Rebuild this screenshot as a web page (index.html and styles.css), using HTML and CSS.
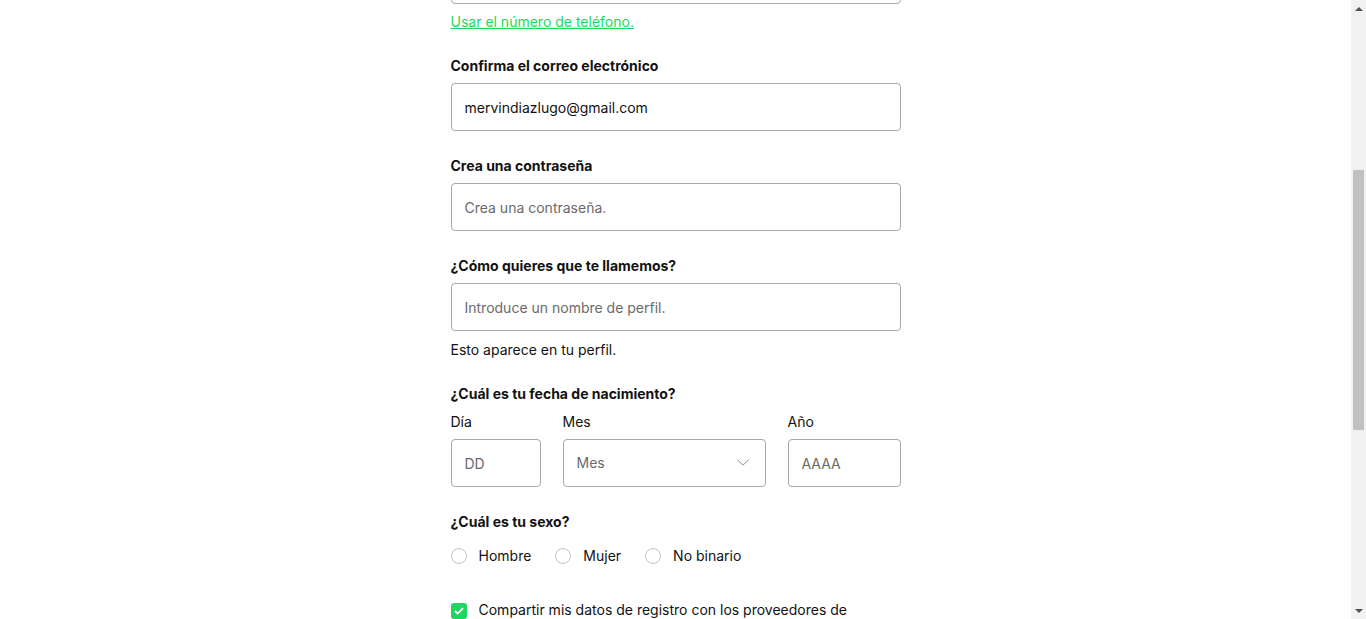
FILE: index.html
```html
<!DOCTYPE html>
<html lang="es">
<head>
<meta charset="utf-8">
<title>Regístrate - Spotify</title>
<link rel="stylesheet" href="styles.css">
</head>
<body>
<div class="window">
  <div class="scroller" id="scroller">
    <div class="page">
      <header class="header">
        <svg class="logo" width="40" height="40" viewBox="0 0 40 40" aria-hidden="true">
          <circle cx="20" cy="20" r="18" fill="#000"/>
          <path d="M10 15c7-2 15-1.5 21 2M11 20.5c6-1.6 12-1 17 1.8M12 25.5c5-1.2 9.5-.8 13.5 1.3" stroke="#fff" stroke-width="2.6" stroke-linecap="round" fill="none"/>
        </svg>
        <span class="brand">Spotify</span>
      </header>
      <main class="form-wrap">
        <h1 class="title">Regístrate gratis para escuchar.</h1>
        <button class="fb-btn" type="button">Regístrate con Facebook</button>
        <div class="divider"><span>o</span></div>
        <h2 class="subtitle">Regístrate con tu dirección de correo electrónico</h2>
        <form class="form">
          <div class="field field-email">
            <label class="label">¿Cuál es tu correo electrónico?</label>
            <input class="input" type="text" value="mervindiazlugo@gmail.com">
            <a class="phone-link" href="#">Usar el número de teléfono.</a>
          </div>
          <div class="field">
            <label class="label">Confirma el correo electrónico</label>
            <input class="input" type="text" value="mervindiazlugo@gmail.com">
          </div>
          <div class="field">
            <label class="label">Crea una contraseña</label>
            <input class="input" type="password" placeholder="Crea una contraseña.">
          </div>
          <div class="field field-name">
            <label class="label">¿Cómo quieres que te llamemos?</label>
            <input class="input" type="text" placeholder="Introduce un nombre de perfil.">
            <p class="help">Esto aparece en tu perfil.</p>
          </div>
          <div class="field">
            <p class="label label-dob">¿Cuál es tu fecha de nacimiento?</p>
            <div class="dob">
              <div class="dob-col dob-day">
                <label class="sublabel">Día</label>
                <input class="input" type="text" placeholder="DD">
              </div>
              <div class="dob-col dob-month">
                <label class="sublabel">Mes</label>
                <div class="select">
                  <span class="select-text">Mes</span>
                  <svg class="chevron" width="12" height="7" viewBox="0 0 12 7" aria-hidden="true"><path d="M0.5 0.8L6 6.2L11.5 0.8" stroke="#8c8c8c" stroke-width="1" fill="none"/></svg>
                </div>
              </div>
              <div class="dob-col dob-year">
                <label class="sublabel">Año</label>
                <input class="input" type="text" placeholder="AAAA">
              </div>
            </div>
          </div>
          <div class="field field-sex">
            <p class="label">¿Cuál es tu sexo?</p>
            <div class="radios">
              <label class="radio"><span class="radio-dot"></span>Hombre</label>
              <label class="radio"><span class="radio-dot"></span>Mujer</label>
              <label class="radio"><span class="radio-dot"></span>No binario</label>
            </div>
          </div>
          <label class="check">
            <span class="check-box"><svg width="10" height="8" viewBox="0 0 10 8" aria-hidden="true"><path d="M1 4l2.7 2.6L9 1.2" stroke="#fff" stroke-width="1.8" fill="none"/></svg></span>
            <span class="check-text">Compartir mis datos de registro con los proveedores de contenido de Spotify para fines de marketing.</span>
          </label>
          <p class="legal">Al hacer clic en Regístrate, aceptas los <a href="#">Términos y Condiciones de Uso de Spotify</a>.</p>
          <p class="legal">Para obtener más información acerca de cómo Spotify recopila, utiliza, comparte y protege tus datos personales, consulta la <a href="#">Política de privacidad de Spotify</a>.</p>
          <div class="submit-row"><button class="submit" type="button">Regístrate</button></div>
          <p class="login">¿Tienes una cuenta? <a href="#">Inicia sesión</a>.</p>
        </form>
      </main>
    </div>
  </div>
  <div class="scrollbar" aria-hidden="true">
    <div class="sb-arrow sb-up"></div>
    <div class="sb-track"><div class="sb-thumb"></div></div>
    <div class="sb-arrow sb-down"></div>
  </div>
</div>
<script src="script.js"></script>
</body>
</html>
```

FILE: styles.css
```css
* { box-sizing: border-box; }
html, body { margin: 0; padding: 0; background: #fff; }
body {
  font-family: Inter, "Liberation Sans", Arial, sans-serif;
  color: #121212;
  font-size: 14px;
  line-height: 20px;
}
.window { display: flex; height: 619px; overflow: hidden; }
.scroller { flex: 1; overflow: hidden; height: 100%; }
.scrollbar { width: 15px; flex: none; background: #f1f1f1; display: flex; flex-direction: column; }
.sb-arrow { height: 17px; display: flex; align-items: center; justify-content: center; }
.sb-up::before {
  content: ""; border-left: 4px solid transparent; border-right: 4px solid transparent;
  border-bottom: 4px solid #505050;
}
.sb-down::before {
  content: ""; border-left: 4px solid transparent; border-right: 4px solid transparent;
  border-top: 4px solid #505050;
}
.sb-track { flex: 1; padding: 0 2px; }
.sb-thumb { margin-top: 153px; height: 260px; background: #c1c1c1; }

.page { display: flex; flex-direction: column; align-items: center; }
.header { display: flex; align-items: center; gap: 4px; padding: 40px 0 24px; }
.brand { font-size: 30px; font-weight: 700; letter-spacing: -1px; }
.form-wrap { width: 450px; display: flex; flex-direction: column; }
.title { font-size: 28px; line-height: 34px; text-align: center; margin: 0 0 24px; font-weight: 700; }
.fb-btn {
  align-self: center; width: 320px; height: 48px; border: none; border-radius: 24px;
  background: #1877f2; color: #fff; font: 700 14px/20px Inter, sans-serif; text-transform: uppercase;
}
.divider { text-align: center; margin: 16px 0; font-weight: 700; }
.subtitle { font-size: 18px; line-height: 24px; text-align: center; margin: 0 0 24px; }
.form { display: flex; flex-direction: column; }
.field { display: flex; flex-direction: column; margin-bottom: 25px; }
.field-email { margin-bottom: 24px; }
.field-name { margin-bottom: 24px; }
.label { font-weight: 700; margin: 0 0 7px; }
.label-dob { margin-bottom: 8px; }
.input {
  width: 100%; height: 48px; border: 1px solid #a7a7a7; border-radius: 4px;
  padding: 0 13px; font: 400 14px/20px Inter, sans-serif; color: #121212; background: #fff;
}
.input::placeholder { color: #6a6a6a; }
.phone-link { margin-top: 8px; color: #1ed760; text-decoration: underline; align-self: flex-start; }
.help { margin: 9px 0 0; }
.dob { display: flex; gap: 22px; }
.dob-col { display: flex; flex-direction: column; }
.dob-day { width: 90px; }
.dob-month { width: 203px; }
.dob-year { width: 113px; }
.sublabel { margin-bottom: 7px; }
.select {
  height: 48px; border: 1px solid #a7a7a7; border-radius: 4px; padding: 0 16px 0 13px;
  display: flex; align-items: center; justify-content: space-between; color: #6a6a6a;
}
.chevron { margin-top: -2px; }
.field-sex { margin-bottom: 34px; }
.radios { display: flex; gap: 24px; padding-top: 7px; }
.radio { display: flex; align-items: center; gap: 12px; }
.radio-dot { width: 16px; height: 16px; border: 1px solid #c4c4c4; border-radius: 50%; }
.check { display: flex; gap: 12px; align-items: flex-start; padding-right: 40px; margin-bottom: 24px; }
.check-box {
  flex: none; width: 16px; height: 16px; margin-top: 3px; border-radius: 3px; background: #1ed760;
  display: flex; align-items: center; justify-content: center;
}
.legal { text-align: center; font-size: 12px; line-height: 18px; margin: 0 0 16px; }
.legal a, .login a { color: #1ed760; }
.submit-row { display: flex; justify-content: center; margin: 16px 0 24px; }
.submit {
  width: 200px; height: 48px; border: none; border-radius: 24px; background: #1ed760;
  color: #000; font: 700 16px/20px Inter, sans-serif;
}
.login { text-align: center; margin: 0 0 60px; }
```

FILE: script.js
```js
window.addEventListener('load', function () {
  var scroller = document.getElementById('scroller');
  var link = document.querySelector('.phone-link');
  scroller.scrollTop = link.offsetTop - 12;
});
```
